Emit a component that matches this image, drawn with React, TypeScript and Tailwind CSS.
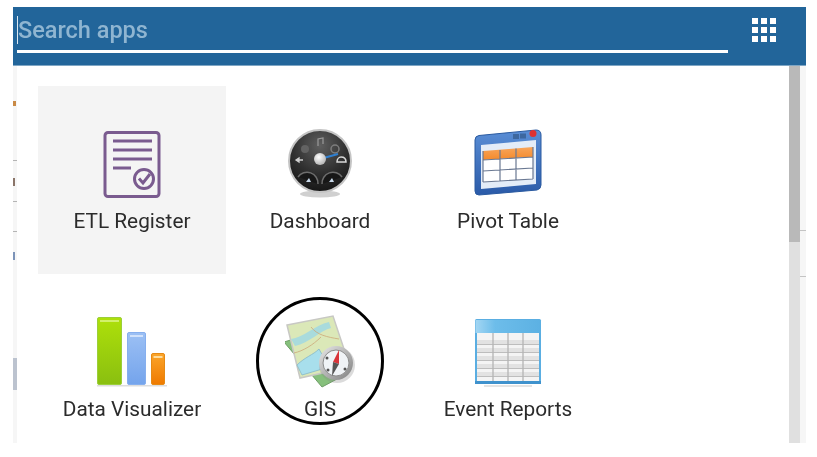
import React from "react";

const EtlIcon = () => (
  <svg width="60" height="70" viewBox="0 0 60 70" fill="none">
    <rect x="3" y="2.500" width="54" height="64" rx="3" stroke="#7a5b8f" strokeWidth="3" />
    <path d="M11 11H50M11 20H50M11 29H50M11 38H29" stroke="#7a5b8f" strokeWidth="3" />
    <circle cx="42" cy="49" r="9.500" fill="#f4f4f4" stroke="#7a5b8f" strokeWidth="3" />
    <path d="M37 48.500L41 53L48 44" stroke="#7a5b8f" strokeWidth="3" />
  </svg>
);

const DashboardIcon = () => (
  <svg width="70" height="72" viewBox="0 0 70 72">
    <defs>
      <radialGradient id="dial" cx="50%" cy="25%" r="80%">
        <stop offset="0" stopColor="#5f5f5f" />
        <stop offset="0.55" stopColor="#303030" />
        <stop offset="1" stopColor="#121212" />
      </radialGradient>
      <radialGradient id="hub" cx="40%" cy="35%" r="70%">
        <stop offset="0" stopColor="#fff" />
        <stop offset="1" stopColor="#b0b0b0" />
      </radialGradient>
    </defs>
    <ellipse cx="35" cy="65" rx="20" ry="3.500" fill="#aaa" opacity="0.55" />
    <circle cx="35" cy="32" r="31" fill="url(#dial)" stroke="#c4c4c4" strokeWidth="2" />
    <path d="M13 48a11 11 0 0 1 20 7M37 55a11 11 0 0 1 20-7" fill="#171717" stroke="#6d6d6d" strokeWidth="1.500" />
    <circle cx="20" cy="20" r="4" fill="#626262" />
    <circle cx="50" cy="20" r="4" fill="none" stroke="#7d7d7d" strokeWidth="1.500" />
    <path d="M33 17v-7l5-1v6" fill="none" stroke="#9a9a9a" strokeWidth="1.200" />
    <path d="M35 30L53 25" stroke="#2f7fd0" strokeWidth="2.200" />
    <path d="M11 31h7M11 31l3-2v4z" stroke="#cfcfcf" strokeWidth="1.300" fill="#cfcfcf" />
    <path d="M52 33c0-3 2-5 4-5 3 0 5 2 5 5z" fill="none" stroke="#d8d8d8" strokeWidth="1.500" />
    <path d="M21 53l3-4 2 4zM44 53l3-4 2 4z" fill="#c9d9ea" />
    <circle cx="35" cy="30" r="6" fill="url(#hub)" />
  </svg>
);

const PivotIcon = () => (
  <svg width="70" height="72" viewBox="0 0 70 72">
    <defs>
      <linearGradient id="frame" x1="0" y1="0" x2="0" y2="1">
        <stop offset="0" stopColor="#5a8ed6" />
        <stop offset="1" stopColor="#2a5aa8" />
      </linearGradient>
      <linearGradient id="head" x1="0" y1="0" x2="0" y2="1">
        <stop offset="0" stopColor="#f8a55a" />
        <stop offset="1" stopColor="#f48a2c" />
      </linearGradient>
    </defs>
    <path d="M2 11Q2 7 6 6.500L63 1Q68 1 68 6V56Q68 60 64 61L6 66Q2 66 2 62Z" fill="url(#frame)" stroke="#2a5aa0" />
    <path d="M8 16L63 11V55L8 60Z" fill="#e3ecf8" />
    <path d="M10 22L60 18V28L10 31Z" fill="url(#head)" />
    <path d="M10 31L60 28V50L10 53Z" fill="#fff" />
    <path d="M10 22V53M27 21V52M43 19.500V51M60 18V50M10 42L60 39M10 53L60 50M10 31L60 28" stroke="#6a7892" strokeWidth="1.200" fill="none" />
    <rect x="40" y="5" width="6" height="5" fill="#3d679f" />
    <rect x="47" y="4.500" width="6" height="5" fill="#3d679f" />
    <circle cx="60" cy="4.500" r="3.500" fill="#dd3232" />
  </svg>
);

const BarsIcon = () => (
  <svg width="72" height="72" viewBox="1 2 72 72">
    <defs>
      <linearGradient id="g" x1="0" y1="0" x2="0" y2="1">
        <stop offset="0" stopColor="#aee00a" />
        <stop offset="1" stopColor="#8abf10" />
      </linearGradient>
      <linearGradient id="b" x1="0" y1="0" x2="0" y2="1">
        <stop offset="0" stopColor="#9cc0f4" />
        <stop offset="1" stopColor="#74a4ec" />
      </linearGradient>
      <linearGradient id="o" x1="0" y1="0" x2="0" y2="1">
        <stop offset="0" stopColor="#fba52a" />
        <stop offset="1" stopColor="#ef7a00" />
      </linearGradient>
    </defs>
    <rect x="2" y="70" width="70" height="1.500" fill="#ddd" />
    <rect x="2.500" y="2.500" width="24" height="67" rx="1.500" fill="url(#g)" stroke="#9bcf3a" />
    <rect x="5" y="5" width="19" height="2" fill="#d2f06c" />
    <rect x="32.500" y="17.500" width="18" height="52" rx="1.500" fill="url(#b)" stroke="#86afee" />
    <rect x="35" y="20" width="13" height="2" fill="#d1e2fb" />
    <rect x="56.500" y="38.500" width="13" height="31" rx="1.500" fill="url(#o)" stroke="#e68a14" />
    <rect x="58.500" y="41" width="9" height="2" fill="#fddc9c" />
  </svg>
);

const GisIcon = () => (
  <svg width="70" height="76" viewBox="0 0 70 76">
    <defs>
      <linearGradient id="ring" x1="0" y1="0" x2="1" y2="1">
        <stop offset="0" stopColor="#e8e8e8" />
        <stop offset="1" stopColor="#808080" />
      </linearGradient>
    </defs>
    <path d="M-1 27L22 20L52 64L37 72Z" fill="#86c07c" stroke="#6f9e67" />
    <path d="M2 10L48 1L65 52L15 63Z" fill="#dbe8b8" stroke="#c8c8c4" strokeWidth="1.500" />
    <path d="M6 24C18 23 30 10 44 7L46 13C36 15 24 28 10 31Z" fill="#a9dbdc" />
    <path d="M12 50C20 42 28 40 34 34L44 52L17 60Z" fill="#a8dfec" stroke="#86b8c8" strokeWidth="0.800" />
    <path d="M9 38C18 36 28 30 36 22M26 12C32 20 42 22 54 24" fill="none" stroke="#cda878" strokeWidth="0.800" />
    <circle cx="52" cy="50" r="18" fill="#888" opacity="0.3" />
    <circle cx="51" cy="48" r="17" fill="url(#ring)" />
    <circle cx="51" cy="48" r="13" fill="#f0f3f6" stroke="#8d8d8d" />
    <path d="M54 35L48 47L54 49Z" fill="#d8343a" />
    <path d="M48 47L47 61L54 49Z" fill="#555" />
    <circle cx="42" cy="43" r="1.500" fill="#555" />
    <circle cx="60" cy="54" r="1.500" fill="#555" />
    <circle cx="43" cy="55" r="1.500" fill="#555" />
  </svg>
);

const TableIcon = () => (
  <svg width="68" height="70" viewBox="0 0 68 70">
    <defs>
      <linearGradient id="top" x1="0" y1="0" x2="1" y2="0">
        <stop offset="0" stopColor="#a3d6f3" />
        <stop offset="0.3" stopColor="#6dbdea" />
        <stop offset="1" stopColor="#5cb1e3" />
      </linearGradient>
    </defs>
    <rect x="1" y="1" width="66" height="65" rx="1.500" fill="#5aaee2" />
    <rect x="1.500" y="2" width="65" height="13" fill="url(#top)" />
    <rect x="3" y="15" width="62" height="48" fill="#f4f4f4" />
    <path d="M3 24H65M3 32H65M3 40H65M3 48H65M3 56H65" stroke="#e2e2e2" strokeWidth="4" />
    <path d="M3 26.500H65M3 34.500H65M3 42.500H65M3 50.500H65M3 58.500H65" stroke="#bdbdbd" />
    <path d="M19 15V63M34 15V63M49 15V63" stroke="#b4b4b4" strokeWidth="1.300" />
    <rect x="1" y="63" width="66" height="3" fill="#3f92cd" />
    <rect x="10" y="67" width="48" height="2" fill="#e4e4e4" />
  </svg>
);

const apps = [
  { name: "ETL Register", icon: <EtlIcon />, active: true },
  { name: "Dashboard", icon: <DashboardIcon /> },
  { name: "Pivot Table", icon: <PivotIcon /> },
  { name: "Data Visualizer", icon: <BarsIcon /> },
  { name: "GIS", icon: <GisIcon />, circled: true },
  { name: "Event Reports", icon: <TableIcon /> },
];

const AppTile = ({ name, icon, active, circled }: { name: string; icon: React.ReactNode; active?: boolean; circled?: boolean }) => (
  <div className={`relative flex h-[188px] w-[188px] flex-col items-center ${active ? "bg-[#f4f4f4]" : "bg-white"}`}>
    <div className="mt-[43px] flex h-[72px] w-[72px] items-center justify-center">{icon}</div>
    <span className="mt-[8px] whitespace-nowrap text-[20.8px] leading-[24px] text-[#2b2b2b]">{name}</span>
    {/* hand drawn ring from the screenshot */}
    {circled && (
      <div className="absolute left-[30px] top-[23px] h-[128px] w-[128px] rounded-full border-[3px] border-black" />
    )}
  </div>
);

const App = () => {
  return (
    <div className="h-[457px] w-[817px] overflow-hidden bg-white pl-[13px] pt-[7px] font-['Roboto',sans-serif] blur-[0.4px]">
      {/* Search bar */}
      <div className="flex h-[59px] w-[793px] items-start border-b border-[#7fa6c4] bg-[#22659a] pl-[4px]">
        <div className="w-[711px]">
          <div className="flex h-[46px] items-center border-b-[3px] border-white pt-[3px]">
            <span className="h-[28px] w-px bg-[#dbe7f0]" />
            <span className="text-[23.500px] font-medium leading-[28px] text-[#8fb5d1]">Search apps</span>
          </div>
        </div>
        <div className="ml-[24px] mt-[11px] grid grid-cols-3 gap-[3px]">
          {Array.from({ length: 9 }).map((_, i) => (
            <span key={i} className="h-[6px] w-[6px] bg-white" />
          ))}
        </div>
      </div>
      {/* Panel */}
      <div className="flex h-[377px] w-[793px]">
        <div className="flex w-[4px] flex-col bg-[#f6f6f6]">
          <span className="mt-[35px] h-[5px] w-[3px] bg-[#c98a45]" />
          <span className="mt-[54px] h-px w-[4px] bg-[#b4b4b4]" />
          <span className="mt-[17px] h-[8px] w-[2px] bg-[#8a7468]" />
          <span className="mt-[15px] h-px w-[4px] bg-[#b4b4b4]" />
          <span className="mt-[29px] h-px w-[4px] bg-[#b4b4b4]" />
          <span className="mt-[20px] h-[8px] w-[2px] bg-[#7c93b8]" />
          <span className="mt-[98px] h-[32px] w-[4px] bg-[#bcc3cf]" />
        </div>
        <div className="w-[772px] overflow-hidden bg-white pl-[21px] pt-[20px]">
          <div className="grid w-[564px] grid-cols-3">
            {apps.map((app) => (
              <AppTile key={app.name} {...app} />
            ))}
          </div>
        </div>
        {/* Scrollbar */}
        <div className="w-[11px] bg-[#e0e0e0]">
          <div className="h-[176px] bg-[#b9b9b9]" />
        </div>
        <div className="flex w-[6px] flex-col bg-[#f6f6f6]">
          <span className="mt-[164px] h-px bg-[#c4c4c4]" />
          <span className="mt-[45px] h-px bg-[#c4c4c4]" />
        </div>
      </div>
    </div>
  );
};

export default App;
